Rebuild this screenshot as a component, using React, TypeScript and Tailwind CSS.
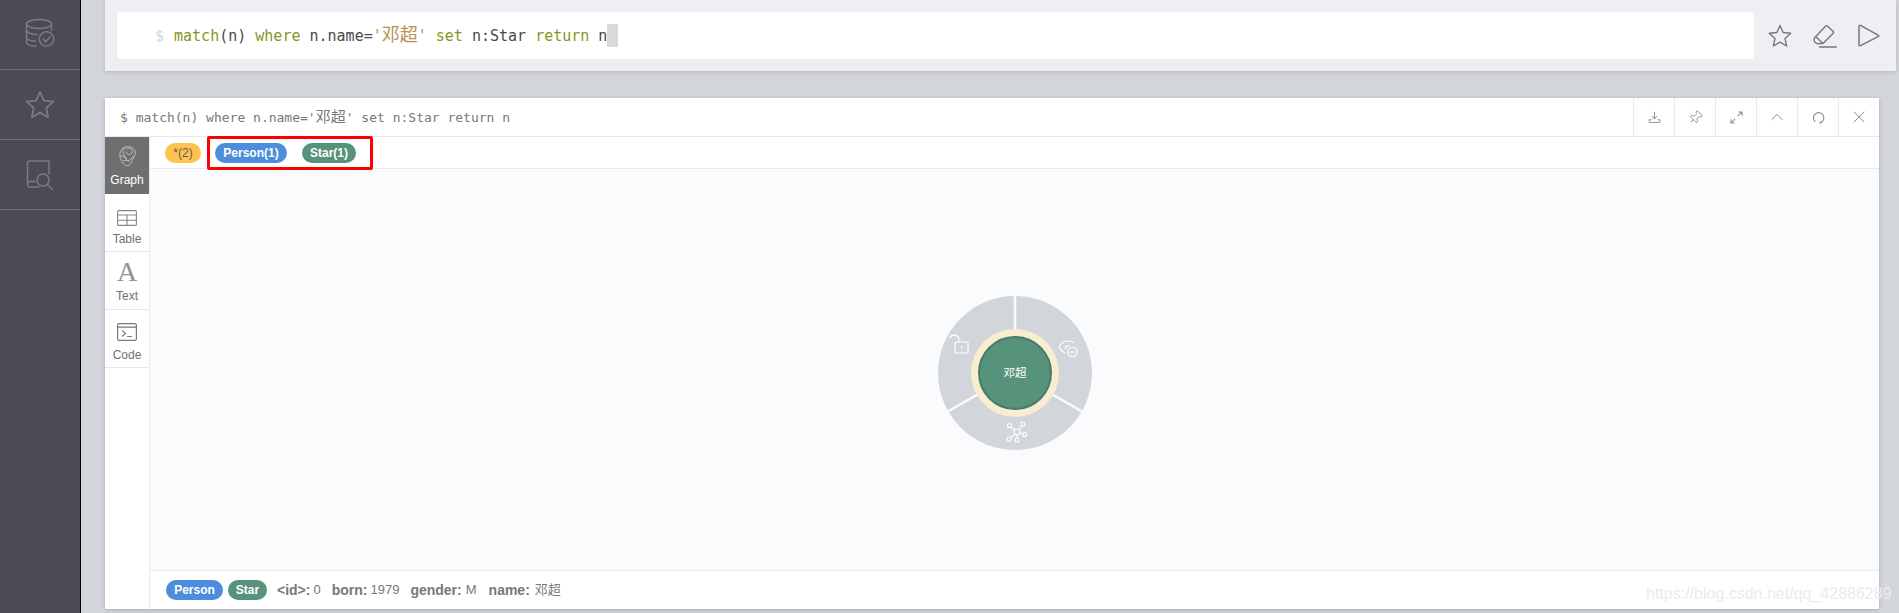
import { ChevronUp, Pin, X } from 'lucide-react';

const SANS = { fontFamily: '"Liberation Sans", "Noto Sans CJK SC", sans-serif' };
const MONO = { fontFamily: '"DejaVu Sans Mono", "Noto Sans CJK SC", monospace' };

function DbIcon() {
  return (
    <svg width="30" height="30" viewBox="0 0 30 30" fill="none" stroke="#7b7a80" strokeWidth="1.5" strokeLinecap="round">
      <ellipse cx="14" cy="6" rx="12.5" ry="4.5" />
      <path d="M1.5 6v18c0 2.5 4 4 10 4.3M26.5 6v6M1.5 12c0 2.5 5 4.5 11 4.5M1.5 19c0 2.5 4 4 9 4.2" />
      <circle cx="21.5" cy="21" r="7.2" />
      <path d="M18 21l2.6 2.8 4.4-5" />
    </svg>
  );
}

function StarIcon({ size, color }: { size: number; color: string }) {
  return (
    <svg width={size} height={size} viewBox="0 0 24 24" fill="none" stroke={color} strokeWidth="1.4" strokeLinejoin="round">
      <path d="M12 1.5l3.1 7 7.6.8-5.7 5.1 1.6 7.6L12 18.1 5.4 22l1.6-7.6L1.3 9.3l7.6-.8z" />
    </svg>
  );
}

function SearchDocIcon() {
  return (
    <svg width="28" height="30" viewBox="0 0 28 30" fill="none" stroke="#7b7a80" strokeWidth="1.5" strokeLinecap="round">
      <path d="M13 27H3.5A2 2 0 0 1 1.5 25V3A2 2 0 0 1 3.5 1H23v13" />
      <path d="M1.5 24a2.5 2.5 0 0 1 2.5-2.5h5" />
      <circle cx="17" cy="20" r="6" />
      <path d="M21.5 24.5l5 5" />
    </svg>
  );
}

function EraserIcon() {
  return (
    <svg width="24" height="24" viewBox="0 0 24 24" fill="none" stroke="#77777c" strokeWidth="1.4" strokeLinejoin="round" strokeLinecap="round">
      <path d="M1.8 13.5L12.5 2.3a1.5 1.5 0 0 1 2.1 0l5.4 5a1.5 1.5 0 0 1 0 2.1L10 19.5H6.3a4 4 0 0 1-4.5-6z" />
      <path d="M2.5 12.6l6.8 6.2" />
      <path d="M6.5 23h17" />
    </svg>
  );
}

function PlayIcon() {
  return (
    <svg width="22" height="23" viewBox="0 0 22 23" fill="none" stroke="#77777c" strokeWidth="1.5" strokeLinejoin="round">
      <path d="M1 2.2a1 1 0 0 1 1.5-.9l18 10a.6.6 0 0 1 0 1l-18 9.4a1 1 0 0 1-1.5-.9z" />
    </svg>
  );
}

function DownloadIcon() {
  return (
    <svg width="13" height="13" viewBox="0 0 14 14" fill="none" stroke="#9a9a9e" strokeWidth="1.1" strokeLinecap="round">
      <path d="M7 1v7M4.8 6l2.2 2.3L9.2 6" />
      <path d="M3.5 9.5H1.2v1.5c0 .8.6 1.5 1.4 1.5h8.8c.8 0 1.4-.7 1.4-1.5V9.5h-2.3" />
    </svg>
  );
}

function ExpandIcon() {
  return (
    <svg width="13" height="13" viewBox="0 0 14 14" fill="none" stroke="#8e8e92" strokeWidth="1.1">
      <path d="M8.4 5.600L13 1M9 1h4v4" />
      <path d="M5.600 8.400L1 13M1 9v4h4" />
    </svg>
  );
}

function RefreshIcon() {
  return (
    <svg width="13" height="13" viewBox="0 0 14 14" fill="none" stroke="#8e8e92" strokeWidth="1.2" strokeLinecap="round">
      <path d="M3.200 11.300A5.600 5.600 0 1 1 11 11.400" />
      <path d="M8 12.800c1 .1 2 0 3-1.400" />
    </svg>
  );
}

function GraphTabIcon() {
  return (
    <svg width="17" height="21" viewBox="0 0 17 21" fill="none" stroke="#dcdcdc" strokeWidth="0.7" strokeLinejoin="round">
      <path d="M6 1c4-1.200 9 .5 10 4 .8 3-.5 5.500-2 7.500-1 2.500-2 5.500-4.500 7C6.500 20.500 4 18 2.800 15 1.500 12.500.3 10 1 7 1.500 4.500 3.500 1.800 6 1z" />
      <path d="M7 3c2-1.500 5-1 6 1 1 2-.5 4.500-2.500 4.500S7 7 7 5.500M4 4.500c.5 4 1.500 7.500 5.500 11M1.500 10c2.500 0 5 .5 6 3M14 10c-.8 2.500-3 4-5 5M4 15c1.500-.5 3-1 4 0M6 1.500C5 3 4.500 4 4 4.500" />
    </svg>
  );
}

function TableTabIcon() {
  return (
    <svg width="20" height="16" viewBox="0 0 20 16" fill="none" stroke="#86868b" strokeWidth="1.1">
      <rect x="0.600" y="0.600" width="18.800" height="14.800" rx="1" />
      <path d="M.6 5h18.800M.6 10.200h18.800M10 5v10.400" />
    </svg>
  );
}

function CodeTabIcon() {
  return (
    <svg width="20" height="18" viewBox="0 0 20 18" fill="none" stroke="#77777c" strokeWidth="1.200" strokeLinecap="round">
      <rect x="0.600" y="0.600" width="18.800" height="16.800" rx="1.500" />
      <path d="M.6 4.200h18.800" />
      <path d="M5.500 8l3 2.500-3 2.500M10.500 13.500h4" />
    </svg>
  );
}

function TabItem({ label, active, icon, iconBox }: { label: string; active?: boolean; icon: React.ReactNode; iconBox: string }) {
  return (
    <div className={active
      ? 'h-[57px] flex flex-col items-center bg-[#6f6f6f] text-white'
      : 'h-[58px] flex flex-col items-center border-b border-[#e6e9ef] text-[#6f6f75]'}
    >
      <div className={iconBox}>{icon}</div>
      <span className="text-[12px] leading-[14px]">{label}</span>
    </div>
  );
}

function Wheel() {
  return (
    <svg width="156" height="156" viewBox="-78 -78 156 156" fill="none">
      <circle r="77" fill="#d2d5da" />
      <g stroke="#f9fbfd" strokeWidth="2.500">
        <path d="M0 0V-78" />
        <path d="M0 0L68 39" />
        <path d="M0 0L-68 39" />
      </g>
      <circle r="44" fill="#f9edd0" />
      <circle r="36" fill="#57927b" stroke="#487c68" strokeWidth="2" />
      <text x="0" y="4" textAnchor="middle" fontSize="11.500" fill="#ffffff" style={SANS}>邓超</text>
      {/* open lock */}
      <g stroke="#ffffff" strokeWidth="1.200" transform="translate(-54 -28)">
        <rect x="-6" y="-3" width="13" height="11" rx="1" />
        <path d="M-2 -3v-2.500a5 5 0 0 0-9.500-1.500" />
        <path d="M.5 1v2.500" />
      </g>
      {/* eye with minus */}
      <g stroke="#ffffff" strokeWidth="1.100" transform="translate(53 -25)">
        <path d="M-9-1c2-4 5-6 9-6 2.500 0 4.500.8 6 2M-9-1c1.500 3 3.500 5 6 6" />
        <path d="M-3 1.500a3.500 3.500 0 0 1 5-3.500" />
        <circle cx="4.500" cy="4" r="4.800" fill="#d2d5da" />
        <path d="M2 4h5" />
      </g>
      {/* nodes */}
      <g stroke="#ffffff" strokeWidth="1.100" transform="translate(2 59)">
        <circle r="3" />
        <circle cx="-7.500" cy="-6.500" r="2" />
        <circle cx="6" cy="-8" r="2" />
        <circle cx="7.500" cy="2.500" r="2" />
        <circle cx="0" cy="8" r="2" />
        <circle cx="-8" cy="7" r="2" />
        <path d="M-2-2l-4-3M2-2.500l3-4M3 .5l3 1.500M0 3v3M-2.200 2.200l-4.500 3.500" />
      </g>
    </svg>
  );
}

function HeaderButton({ children }: { children: React.ReactNode }) {
  return (
    <div className="w-[41px] flex items-center justify-center border-l border-[#e6e9ef]">{children}</div>
  );
}

function Pill({ bg, children }: { bg: string; children: React.ReactNode }) {
  return (
    <span className={`inline-flex items-center justify-center h-[20px] rounded-full text-[12px] font-bold text-white ${bg}`}>{children}</span>
  );
}

export default function App() {
  return (
    <div className="relative h-[613px] w-[1899px] flex overflow-hidden bg-[#d2d5da]" style={SANS}>
      <aside className="w-[81px] shrink-0 bg-[#4d4a57] border-r border-black">
        <div className="h-[70px] flex items-center justify-center border-b border-[#6b6a75] pb-[3px]"><DbIcon /></div>
        <div className="h-[70px] flex items-center justify-center border-b border-[#6b6a75]"><StarIcon size={30} color="#7b7a80" /></div>
        <div className="h-[70px] flex items-center justify-center border-b border-[#6b6a75]"><SearchDocIcon /></div>
      </aside>

      <main className="flex-1 min-w-0 pl-[24px]">
        <div className="h-[71px] mr-[3px] pl-[12px] bg-[#eeeef3] flex items-center shadow-[0_1px_4px_rgba(0,0,0,0.15)]">
          <div className="h-[47px] w-[1637px] bg-white rounded-[4px] pl-[38px] flex items-center text-[15px]" style={MONO}>
            <span className="text-[#d3d6db] mr-[10px] pt-[2px]">$</span>
            <span className="whitespace-pre text-[#4a4a4a] pt-[2px]">
              <span className="text-[#85961f]">match</span>(n) <span className="text-[#85961f]">where</span> n.name=<span className="text-[#b5925a]">'<span className="text-[18px] leading-[18px]">邓超</span>'</span> <span className="text-[#85961f]">set</span> n:Star <span className="text-[#85961f]">return</span> n
            </span>
            <span className="w-[11px] h-[23px] bg-[#d8d9dc]" />
          </div>
          <div className="flex items-center ml-[14px] gap-[21px]">
            <StarIcon size={24} color="#77777c" />
            <EraserIcon />
            <PlayIcon />
          </div>
        </div>

        <section className="mt-[27px] mr-[20px] h-[511px] bg-white flex flex-col shadow-[0_1px_4px_rgba(0,0,0,0.2)]">
          <header className="h-[39px] shrink-0 flex border-b border-[#e6e9ef]">
            <div className="flex-1 pl-[15px] pt-[2px] flex items-center text-[13px] text-[#77777c]" style={MONO}>
              <span className="whitespace-pre">$ match(n) where n.name='<span className="text-[15px] leading-[15px]">邓超</span>' set n:Star return n</span>
            </div>
            <HeaderButton><DownloadIcon /></HeaderButton>
            <HeaderButton><Pin size={15} strokeWidth={1.2} color="#77777c" className="rotate-45" /></HeaderButton>
            <HeaderButton><ExpandIcon /></HeaderButton>
            <HeaderButton><ChevronUp size={20} strokeWidth={1} color="#77777c" /></HeaderButton>
            <HeaderButton><RefreshIcon /></HeaderButton>
            <HeaderButton><X size={20} strokeWidth={1} color="#77777c" /></HeaderButton>
          </header>

          <div className="flex-1 min-h-0 flex">
            <nav className="w-[44px] shrink-0">
              <TabItem label="Graph" active icon={<GraphTabIcon />} iconBox="h-[36px] pt-[9px]" />
              <TabItem label="Table" icon={<TableTabIcon />} iconBox="h-[38px] pt-[16px]" />
              <TabItem label="Text" icon={<span className="text-[28px] leading-[28px] text-[#929297]" style={{ fontFamily: '"Liberation Serif", serif' }}>A</span>} iconBox="h-[37px] pt-[6px]" />
              <TabItem label="Code" icon={<CodeTabIcon />} iconBox="h-[38px] pt-[13px]" />
            </nav>
            <div className="flex-1 min-w-0 flex flex-col border-l border-[#e6e9ef] bg-[#f9fbfd]">
              <div className="relative h-[32px] shrink-0 bg-white border-b border-[#e6e9ef] flex items-center pl-[15px]">
                <span className="inline-flex items-center justify-center w-[36px] h-[20px] rounded-full bg-[#ffc24d] text-[12px] text-[#5f5f5f]">*(2)</span>
                <Pill bg="ml-[14px] w-[72px] bg-[#4c8edb]">Person(1)</Pill>
                <Pill bg="ml-[15px] w-[54px] bg-[#57927b]">Star(1)</Pill>
                <div className="absolute left-[57px] top-[-1px] w-[166px] h-[34px] border-[3px] border-[#ff0000] rounded-[2px]" />
              </div>
              <div className="flex-1 flex items-center justify-center pt-[6px]">
                <Wheel />
              </div>
              <footer className="h-[39px] shrink-0 bg-white border-t border-[#e6e9ef] pl-[16px] flex items-center text-[13px] text-[#77777c]">
                <Pill bg="w-[57px] bg-[#4c8edb]">Person</Pill>
                <Pill bg="ml-[5px] w-[39px] bg-[#57927b]">Star</Pill>
                <b className="ml-[10px] text-[14px]">&lt;id&gt;:</b><span className="ml-[3px]">0</span>
                <b className="ml-[11px] text-[14px]">born:</b><span className="ml-[3px]">1979</span>
                <b className="ml-[11px] text-[14px]">gender:</b><span className="ml-[4px]">M</span>
                <b className="ml-[12px] text-[14px]">name:</b><span className="ml-[5px]">邓超</span>
              </footer>
            </div>
          </div>
        </section>
      </main>

      <div className="absolute left-[1646px] top-[584px] text-[16px] leading-[20px] text-[#ebebed] whitespace-nowrap">https://blog.csdn.net/qq_42886289</div>
    </div>
  );
}
